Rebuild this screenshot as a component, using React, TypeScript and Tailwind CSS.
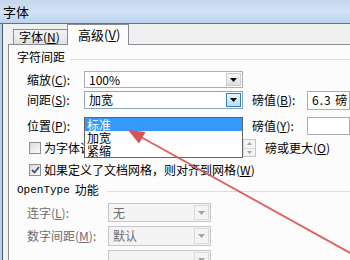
import React from 'react';

// ── Small pieces ───────────────────────────────────────────────────────────────

function Caret({ color = '#000' }: { color?: string }) {
  return (
    <svg width="7" height="4" viewBox="0 0 7 4">
      <polygon points="0,0 7,0 3.5,4" fill={color} />
    </svg>
  );
}

function Key({ k }: { k: string }) {
  return (
    <>
      (<span className="underline underline-offset-[1px]">{k}</span>)
    </>
  );
}

function Combo({
  value,
  width,
  focused = false,
  disabled = false,
}: {
  value?: string;
  width: string;
  focused?: boolean;
  disabled?: boolean;
}) {
  return (
    <div
      className={`${width} h-full flex items-stretch border ${
        disabled
          ? 'border-[#c3c6ca] bg-[#f4f4f4] text-[#6d6d6d]'
          : focused
          ? 'border-[#8aa6c1] bg-white'
          : 'border-[#abadb3] bg-white'
      }`}
    >
      <div className="flex-1 flex items-center pl-[4px]">{value}</div>
      <div
        className={`w-[15px] m-px flex items-center justify-center border ${
          disabled
            ? 'border-[#d7d9dc] bg-[#f4f4f4]'
            : focused
            ? 'border-[#3c7fb1] bg-gradient-to-b from-[#e5f4fc] to-[#b9dff5]'
            : 'border-[#c9cbd0] bg-gradient-to-b from-[#f7f7f7] to-[#dedede]'
        }`}
      >
        <Caret color={disabled ? '#a5a5a5' : '#000'} />
      </div>
    </div>
  );
}

function Check({ checked = false }: { checked?: boolean }) {
  return (
    <div className="w-[12px] h-[12px] border border-[#8f8f8f] bg-gradient-to-br from-[#dcdcdc] to-[#fbfbfb] flex items-center justify-center">
      {checked && (
        <svg width="9" height="8" viewBox="0 0 9 8">
          <path d="M1 4 L3.5 6.5 L8 1" stroke="#3b4f8a" strokeWidth="1.8" fill="none" />
        </svg>
      )}
    </div>
  );
}

// ── Component ──────────────────────────────────────────────────────────────────

export default function App() {
  return (
    <div className="relative w-[350px] h-[260px] overflow-hidden text-[12px] leading-none text-black font-['Noto_Sans_CJK_SC',sans-serif]">
      {/* Title bar */}
      <div className="h-[23px] pl-[3px] pt-[5px] text-[13px] bg-gradient-to-b from-[#c3d6ec] via-[#d2e2f5] to-[#bcd3ee]">字体</div>
      <div className="h-px bg-[#627184]" />

      <div className="flex h-[236px]">
        <div className="w-[2px] bg-[#b9d0e8]" />
        <div className="w-px bg-[#4d5868]" />
        <div className="flex-1 flex flex-col bg-[#f0f0f0] pl-[5px]">
          {/* Tabs */}
          <div className="h-[27px] flex items-end pl-[5px]">
            <div className="h-[15px] w-[54px] border-t border-l border-[#898c95] bg-gradient-to-b from-[#f3f3f3] to-[#e1e1e1] flex items-center pl-[5px]">
              字体<Key k="N" />
            </div>
            <div className="relative z-10 -mb-px h-[21px] w-[62px] border-t border-l border-r border-[#898c95] bg-[#fcfcfc] flex items-center pl-[10px] pb-[2px] text-[13px]">
              高级<Key k="V" />
            </div>
          </div>

          {/* Panel */}
          <div className="flex-1 border-t border-l border-[#898c95] bg-[#fcfcfc] flex flex-col">
            {/* 字符间距 */}
            <div className="mt-[5px] h-[14px] flex items-center pl-[8px]">
              <span>字符间距</span>
              <div className="flex-1 h-px bg-[#d5dfe5] ml-[5px] translate-y-[2px]" />
            </div>

            <div className="mt-[7px] h-[17px] flex items-center pl-[18px]">
              <div className="w-[57px]">缩放<Key k="C" />:</div>
              <Combo value="100%" width="w-[159px]" />
            </div>

            <div className="mt-[3px] h-[18px] flex items-center pl-[18px]">
              <div className="w-[57px]">间距<Key k="S" />:</div>
              <Combo value="加宽" width="w-[159px]" focused />
              <div className="w-[55px] ml-[9px]">磅值<Key k="B" />:</div>
              <div className="flex-1 h-[19px] border border-[#abadb3] bg-white flex items-center pl-[4px] tracking-[1px]">6.3 磅</div>
            </div>

            <div className="mt-[8px] h-[18px] flex items-center pl-[18px]">
              <div className="w-[57px]">位置<Key k="P" />:</div>
              <Combo width="w-[159px]" />
              <div className="w-[55px] ml-[9px]">磅值<Key k="Y" />:</div>
              <div className="flex-1 h-[18px] border border-[#abadb3] bg-white" />
            </div>

            <div className="mt-[4px] h-[18px] flex items-center pl-[20px]">
              <div className="w-[148px] flex items-center gap-[3px]">
                <Check />
                <span>为字体调整字间距<Key k="K" />:</span>
              </div>
              <div className="w-[79px] h-full flex border border-[#c3c6ca] bg-[#f4f4f4]">
                <div className="flex-1" />
                <div className="w-[12px] flex flex-col border-l border-[#d7d9dc]">
                  <div className="flex-1 flex items-center justify-center">
                    <svg width="5" height="3" viewBox="0 0 5 3"><polygon points="0,3 5,3 2.5,0" fill="#a5a5a5" /></svg>
                  </div>
                  <div className="flex-1 flex items-center justify-center border-t border-[#d7d9dc]">
                    <svg width="5" height="3" viewBox="0 0 5 3"><polygon points="0,0 5,0 2.5,3" fill="#a5a5a5" /></svg>
                  </div>
                </div>
              </div>
              <div className="ml-[9px]">磅或更大<Key k="O" /></div>
            </div>

            <div className="mt-[5px] h-[16px] flex items-center pl-[20px] gap-[3px]">
              <Check checked />
              <span>如果定义了文档网格，则对齐到网格<Key k="W" /></span>
            </div>

            {/* OpenType 功能 */}
            <div className="mt-[5px] h-[14px] flex items-center pl-[8px]">
              <span className="font-['Liberation_Mono','Noto_Sans_CJK_SC',monospace] text-[11px]">OpenType</span>
              <span className="ml-[5px]">功能</span>
              <div className="flex-1 h-px bg-[#d5dfe5] ml-[8px] translate-y-[1px]" />
            </div>

            <div className="mt-[6px] h-[19px] flex items-center pl-[18px] text-[#6d6d6d]">
              <div className="w-[81px]">连字<Key k="L" />:</div>
              <Combo value="无" width="w-[103px]" disabled />
            </div>

            <div className="mt-[4px] h-[20px] flex items-center pl-[18px] text-[#6d6d6d]">
              <div className="w-[81px]">数字间距<Key k="M" />:</div>
              <Combo value="默认" width="w-[103px]" disabled />
            </div>

            {/* next row, cut off by the window edge */}
            <div className="mt-[4px] h-[20px] flex items-center pl-[18px] text-[#6d6d6d]">
              <div className="w-[81px]" />
              <Combo width="w-[103px]" disabled />
            </div>
          </div>
        </div>
      </div>

      {/* Open drop-down list of 间距 */}
      <div className="absolute left-[84px] top-[117px] w-[159px] h-[41px] border border-[#646464] bg-white flex flex-col">
        <div className="h-[13px] bg-[#3399ff] text-white flex items-center pl-[2px]">标准</div>
        <div className="h-[13px] flex items-center pl-[2px]">加宽</div>
        <div className="h-[13px] flex items-center pl-[2px]">紧缩</div>
      </div>

      {/* Red annotation arrow */}
      <svg className="absolute inset-0 pointer-events-none" width="350" height="260" viewBox="0 0 350 260">
        <line x1="352" y1="254" x2="140" y2="136.5" stroke="#d9534f" strokeWidth="2" strokeOpacity="0.9" />
        <polygon points="128,130 139,143.5 145.5,132" fill="#d9534f" />
      </svg>
    </div>
  );
}
